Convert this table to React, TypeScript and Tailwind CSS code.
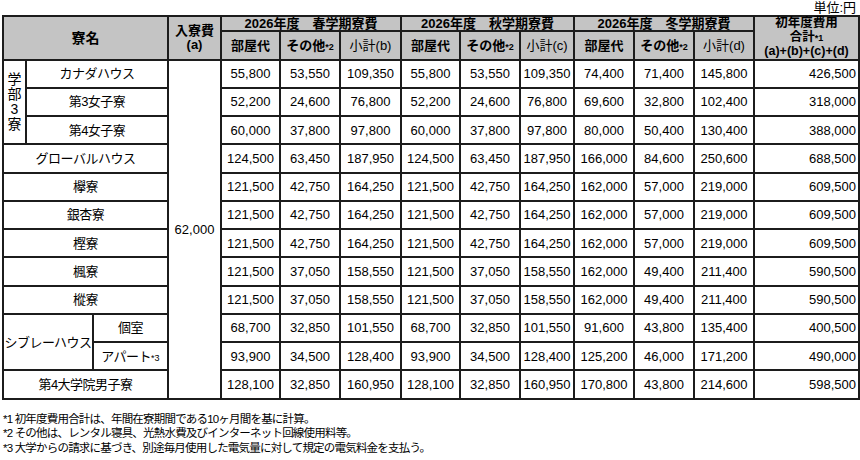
type Fees = [string, string, string];

type Row = {
  name: string;
  spring: Fees;
  autumn?: Fees;
  winter: Fees;
  total: string;
};

const campus: Row[] = [
  { name: "カナダハウス", spring: ["55,800", "53,550", "109,350"], winter: ["74,400", "71,400", "145,800"], total: "426,500" },
  { name: "第3女子寮", spring: ["52,200", "24,600", "76,800"], winter: ["69,600", "32,800", "102,400"], total: "318,000" },
  { name: "第4女子寮", spring: ["60,000", "37,800", "97,800"], winter: ["80,000", "50,400", "130,400"], total: "388,000" },
];

const singles: Row[] = [
  { name: "グローバルハウス", spring: ["124,500", "63,450", "187,950"], winter: ["166,000", "84,600", "250,600"], total: "688,500" },
  { name: "欅寮", spring: ["121,500", "42,750", "164,250"], winter: ["162,000", "57,000", "219,000"], total: "609,500" },
  { name: "銀杏寮", spring: ["121,500", "42,750", "164,250"], winter: ["162,000", "57,000", "219,000"], total: "609,500" },
  { name: "樫寮", spring: ["121,500", "42,750", "164,250"], winter: ["162,000", "57,000", "219,000"], total: "609,500" },
  { name: "楓寮", spring: ["121,500", "37,050", "158,550"], winter: ["162,000", "49,400", "211,400"], total: "590,500" },
  { name: "樅寮", spring: ["121,500", "37,050", "158,550"], winter: ["162,000", "49,400", "211,400"], total: "590,500" },
];

const sibley: Row[] = [
  { name: "個室", spring: ["68,700", "32,850", "101,550"], winter: ["91,600", "43,800", "135,400"], total: "400,500" },
  { name: "アパート", spring: ["93,900", "34,500", "128,400"], winter: ["125,200", "46,000", "171,200"], total: "490,000" },
];

const grad: Row = {
  name: "第4大学院男子寮",
  spring: ["128,100", "32,850", "160,950"],
  winter: ["170,800", "43,800", "214,600"],
  total: "598,500",
};

const cell = "border-2 border-[#1c1c1c] p-0 text-center align-middle";
const hd = `${cell} bg-[#c4c4c4] font-bold`;

function Nums({ row }: { row: Row }) {
  const autumn = row.autumn ?? row.spring;
  return (
    <>
      {[...row.spring, ...autumn, ...row.winter].map((v, i) => (
        <td key={i} className={cell}>
          {v}
        </td>
      ))}
      <td className={`${cell} text-right pr-[2px]`}>{row.total}</td>
    </>
  );
}

function Term({ label }: { label: string }) {
  return (
    <th colSpan={3} className={`${hd} text-[13px] leading-none`}>
      2026年度　{label}学期寮費
    </th>
  );
}

function SubHeads({ k }: { k: string }) {
  return (
    <>
      <th className={`${hd} text-[13px]`}>部屋代</th>
      <th className={`${hd} text-[13px]`}>
        その他<span className="text-[9px]">*2</span>
      </th>
      <th className={`${cell} bg-[#c4c4c4] font-normal text-[13px]`}>小計({k})</th>
    </>
  );
}

export default function App() {
  const widths = [23, 67, 75, 53, 59, 60, 61, 59, 60, 54, 60, 60, 60, 105];
  return (
    <div className="w-[860px] h-[460px] bg-white text-black font-['Liberation_Sans','Noto_Sans_CJK_JP',sans-serif]">
      <div className="h-[15px] text-right pr-[4px] text-[13px] leading-[15px]">単位:円</div>
      <table className="ml-[2px] w-[856px] table-fixed border-collapse text-[13px] leading-none">
        <colgroup>
          {widths.map((w, i) => (
            <col key={i} style={{ width: w }} />
          ))}
        </colgroup>
        <thead>
          <tr className="h-[15px]">
            <th colSpan={3} rowSpan={2} className={`${hd} text-[14px]`}>
              寮名
            </th>
            <th rowSpan={2} className={`${hd} text-[13px] leading-[14px]`}>
              入寮費
              <br />
              (a)
            </th>
            <Term label="春" />
            <Term label="秋" />
            <Term label="冬" />
            <th rowSpan={2} className={`${hd} text-[12.5px] leading-[13.5px]`}>
              初年度費用
              <br />
              合計<span className="text-[9px]">*1</span>
              <br />
              (a)+(b)+(c)+(d)
            </th>
          </tr>
          <tr className="h-[28px]">
            <SubHeads k="b" />
            <SubHeads k="c" />
            <SubHeads k="d" />
          </tr>
        </thead>
        <tbody>
          {campus.map((r, i) => (
            <tr key={r.name} className="h-[28.25px]">
              {i === 0 && (
                <td rowSpan={3} className={`${cell} text-[14px]`}>
                  <div className="flex flex-col items-center leading-[15px]">
                    <span>学</span>
                    <span>部</span>
                    <span>3</span>
                    <span>寮</span>
                  </div>
                </td>
              )}
              <td colSpan={2} className={`${cell} tracking-[-0.5px]`}>
                {r.name}
              </td>
              {i === 0 && (
                <td rowSpan={12} className={cell}>
                  62,000
                </td>
              )}
              <Nums row={r} />
            </tr>
          ))}
          {singles.map((r) => (
            <tr key={r.name} className="h-[28.25px]">
              <td colSpan={3} className={`${cell} tracking-[-0.5px]`}>
                {r.name}
              </td>
              <Nums row={r} />
            </tr>
          ))}
          {sibley.map((r, i) => (
            <tr key={r.name} className="h-[28.25px]">
              {i === 0 && (
                <td colSpan={2} rowSpan={2} className={`${cell} tracking-[-0.5px]`}>
                  シブレーハウス
                </td>
              )}
              <td className={`${cell} tracking-[-0.5px]`}>
                {r.name}
                {i === 1 && <span className="text-[9px] tracking-normal">*3</span>}
              </td>
              <Nums row={r} />
            </tr>
          ))}
          <tr className="h-[28.25px]">
            <td colSpan={3} className={`${cell} tracking-[-0.5px]`}>
              {grad.name}
            </td>
            <Nums row={grad} />
          </tr>
        </tbody>
      </table>
      <div className="mt-[12px] pl-[3px] text-[11.5px] leading-[14.5px] tracking-[-0.8px]">
        <p>*1 初年度費用合計は、年間在寮期間である10ヶ月間を基に計算。</p>
        <p>*2 その他は、レンタル寝具、光熱水費及びインターネット回線使用料等。</p>
        <p>*3 大学からの請求に基づき、別途毎月使用した電気量に対して規定の電気料金を支払う。</p>
      </div>
    </div>
  );
}
